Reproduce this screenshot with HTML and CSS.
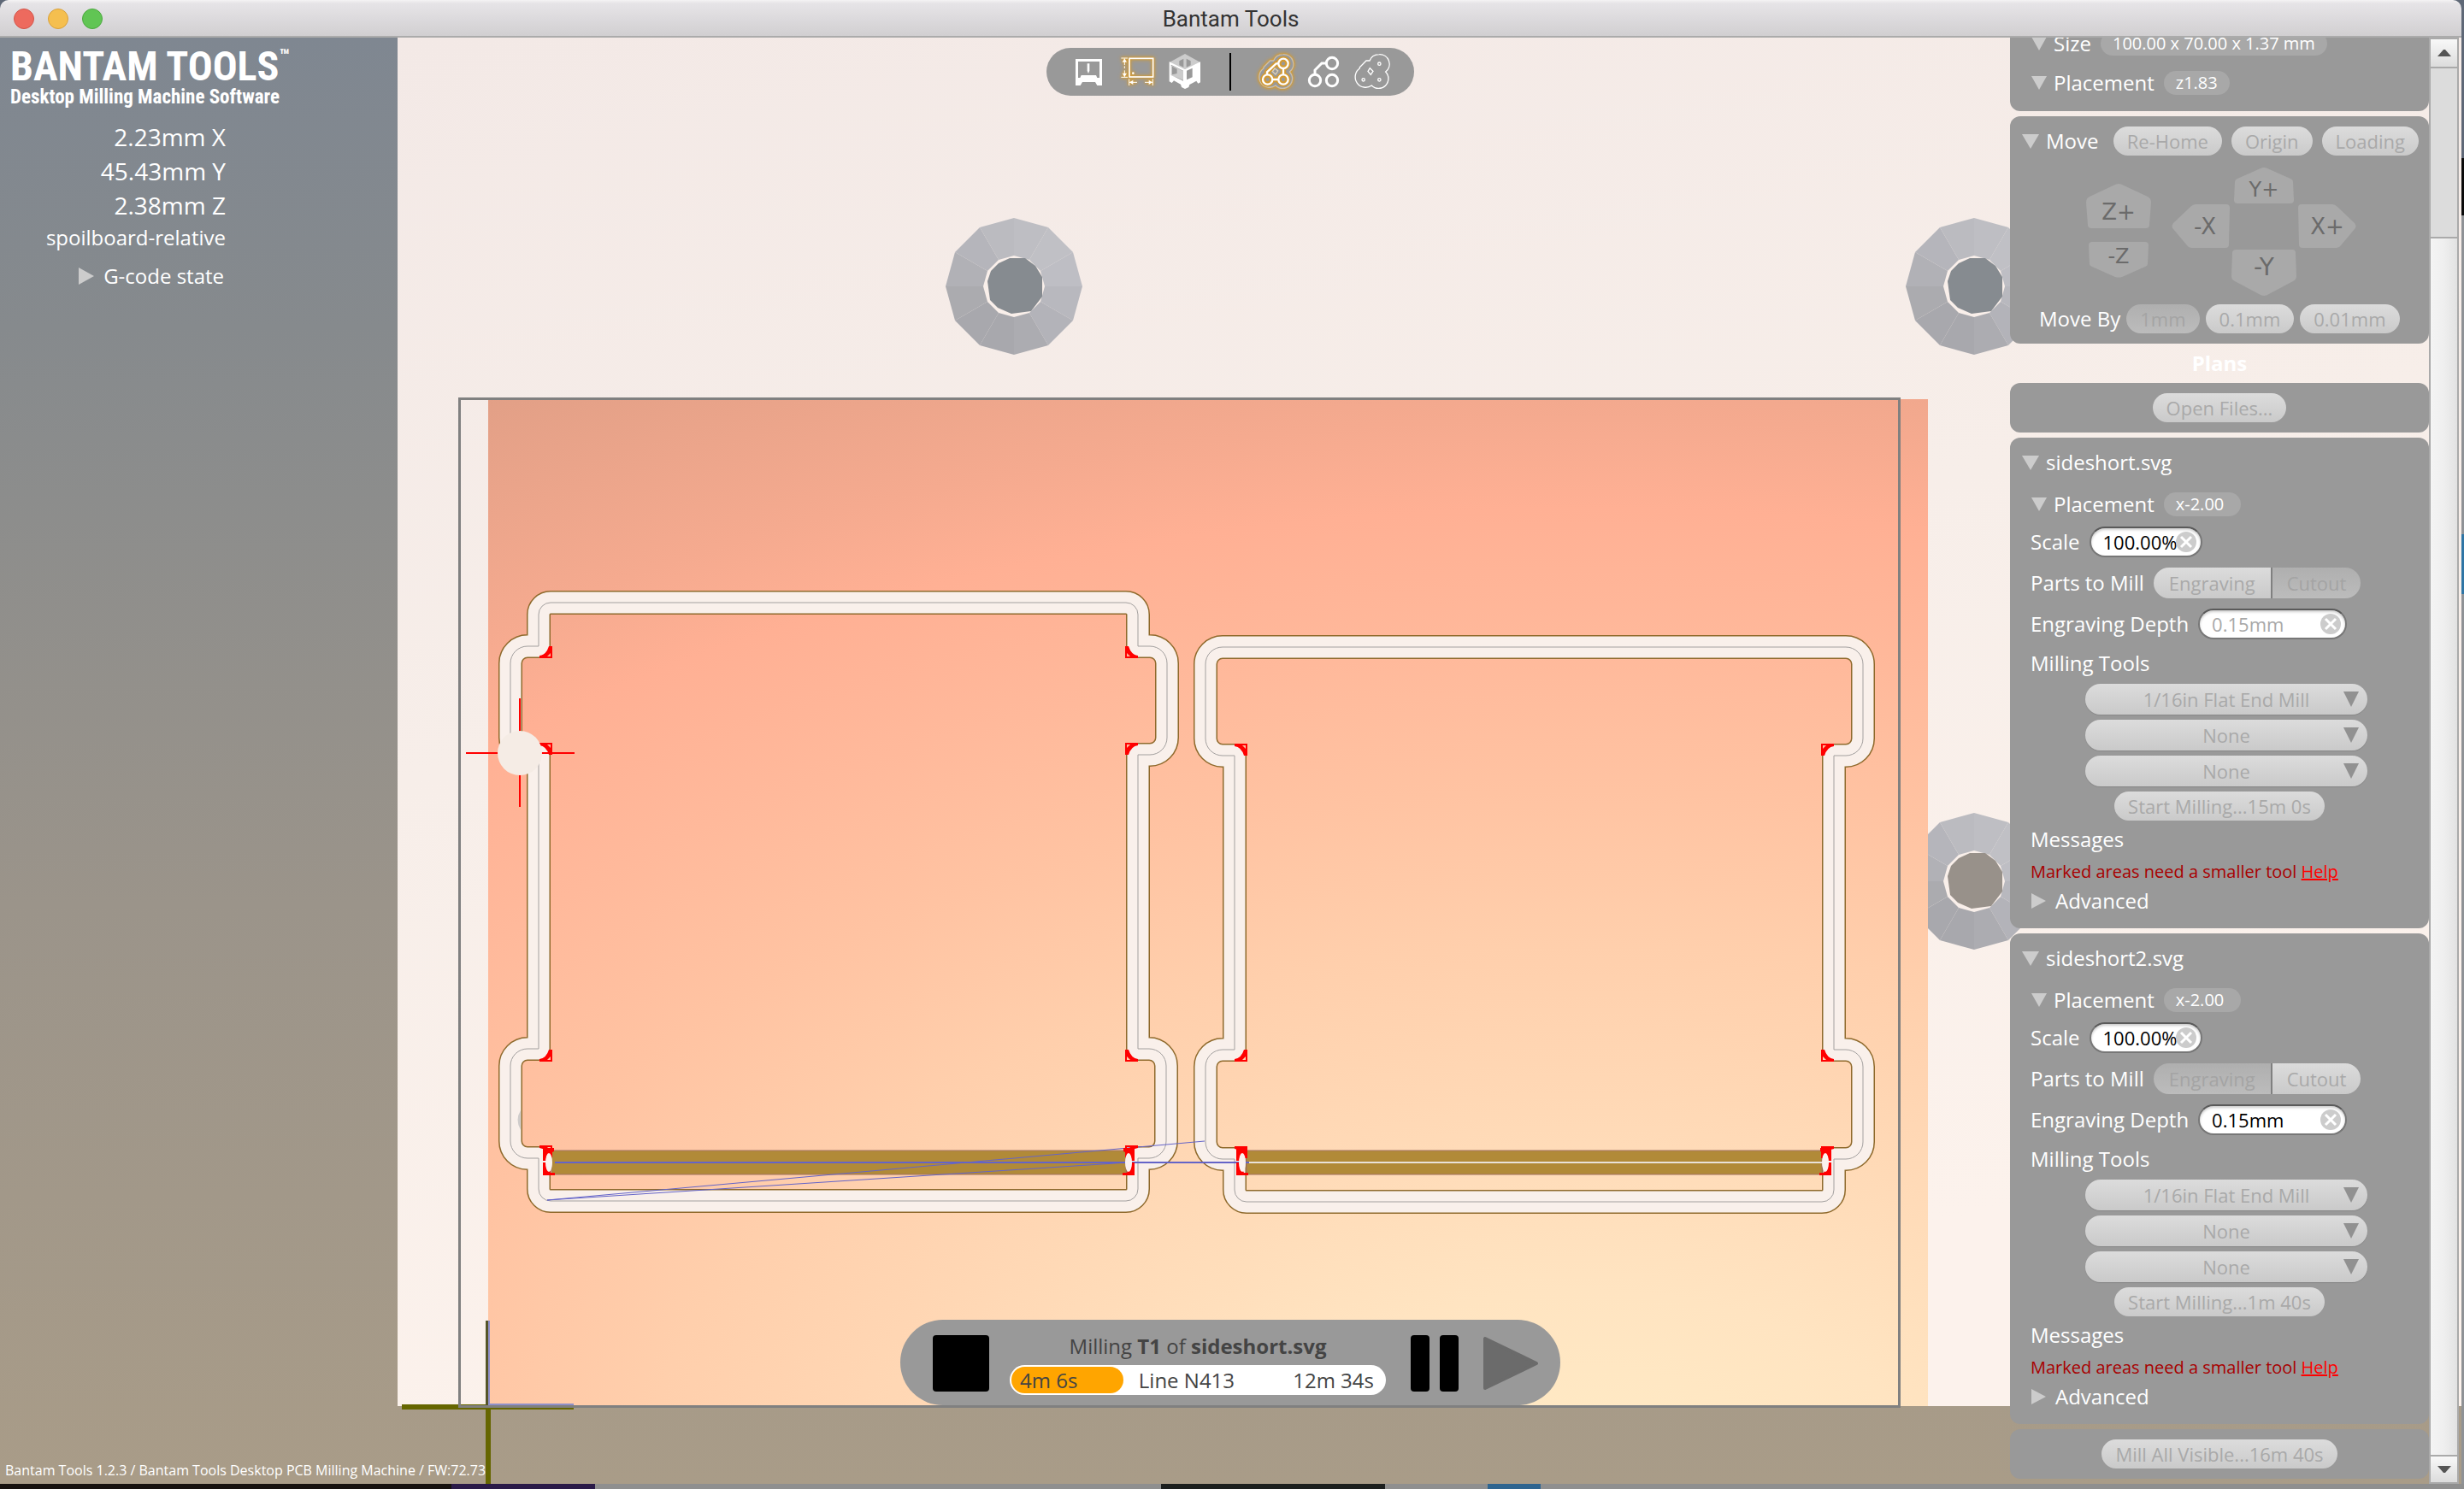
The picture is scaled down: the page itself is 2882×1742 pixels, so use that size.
FILE: index.html
```html
<!DOCTYPE html>
<html lang="en">
<head>
<meta charset="utf-8">
<title>Bantam Tools</title>
<link rel="stylesheet" href="styles.css">
</head>
<body>
<div class="window">
  <header class="titlebar">
    <div class="lights">
      <button class="light light-close" aria-label="Close"></button>
      <button class="light light-min" aria-label="Minimize"></button>
      <button class="light light-zoom" aria-label="Zoom"></button>
    </div>
    <h1 class="window-title">Bantam Tools</h1>
  </header>

  <div class="stage">
    <svg class="scene" viewBox="0 44 2879 1692" preserveAspectRatio="none" aria-hidden="true">
      <defs>
        <linearGradient id="bed" x1="0" y1="0" x2="0.3" y2="1">
          <stop offset="0" stop-color="#f3e9e6"/><stop offset="0.5" stop-color="#f7eee9"/><stop offset="1" stop-color="#fcf2ec"/>
        </linearGradient>
        <radialGradient id="stock" gradientUnits="userSpaceOnUse" cx="0" cy="0" r="1500" gradientTransform="translate(1850 1750) scale(1.7 1)">
          <stop offset="0" stop-color="#ffecc6"/><stop offset="0.16" stop-color="#ffe4c1"/><stop offset="0.3" stop-color="#ffd9b6"/>
          <stop offset="0.43" stop-color="#ffcfac"/><stop offset="0.55" stop-color="#ffc3a2"/><stop offset="0.66" stop-color="#ffb99b"/>
          <stop offset="0.77" stop-color="#ffb094"/><stop offset="0.84" stop-color="#f5aa8f"/><stop offset="1" stop-color="#e19f86"/>
        </radialGradient>
        <g id="washer">
          <path fill="#bebec3" d="M0 0V-80L40-69Z"/><path fill="#c0c0c5" d="M0 0L40-69L69-40Z"/><path fill="#bebec4" d="M0 0L69-40L80 0Z"/>
          <path fill="#b8b8be" d="M0 0H80L69 40Z"/><path fill="#b3b3b9" d="M0 0L69 40L40 69Z"/><path fill="#acacb1" d="M0 0L40 69L0 80Z"/>
          <path fill="#a8a8ad" d="M0 0V80L-40 69Z"/><path fill="#a8a8ad" d="M0 0L-40 69L-69 40Z"/><path fill="#ababaf" d="M0 0L-69 40L-80 0Z"/>
          <path fill="#b1b1b6" d="M0 0H-80L-69-40Z"/><path fill="#b5b5bb" d="M0 0L-69-40L-40-69Z"/><path fill="#bbbbc0" d="M0 0L-40-69L0-80Z"/>
          <path fill="#f9efea" d="M0-36L18-31L31-18L36 0L31 18L18 31L0 36L-18 31L-31 18L-36 0L-31-18L-18-31Z"/>
          <path d="M-5-33H13L25-24L33-11V12L20 29L-3 32L-19 25L-28 16L-31-6L-27-18L-18-27Z"/>
        </g>
        <g id="corner">
          <path fill="#f00" fill-rule="evenodd" d="M0 0H-15V-3Q-7-4-4-14H0ZM-2-2V-6L-6-2Z"/>
        </g>
        <g id="hook">
          <path fill="#f00" d="M0-17H13V-13L9-11V-2H0ZM0 0H3L9 12H14V15H0Z"/>
          <ellipse cx="7" cy="0" rx="4" ry="11" fill="#fbf2ee"/>
        </g>
        <path id="part1" d="M644 705H1317A14 14 0 0 1 1331 719V756H1345A20 20 0 0 1 1365 776V863A20 20 0 0 1 1345 883H1331V1227H1344A20 20 0 0 1 1364 1247V1335A20 20 0 0 1 1344 1355H1331V1391A14 14 0 0 1 1317 1405H644A14 14 0 0 1 630 1391V1355H617A20 20 0 0 1 597 1335V1247A20 20 0 0 1 617 1227H630V883H617A20 20 0 0 1 597 863V776A20 20 0 0 1 617 756H630V719A14 14 0 0 1 644 705Z"/>
        <path id="part2" d="M1430 757H2159A20 20 0 0 1 2179 777V864A20 20 0 0 1 2159 884H2145V1228H2159A20 20 0 0 1 2179 1248V1336A20 20 0 0 1 2159 1356H2145V1392A14 14 0 0 1 2131 1406H1458A14 14 0 0 1 1444 1392V1356H1430A20 20 0 0 1 1410 1336V1248A20 20 0 0 1 1430 1228H1444V884H1430A20 20 0 0 1 1410 864V777A20 20 0 0 1 1430 757Z"/>
      </defs>
      <rect x="465" y="44" width="2414" height="1601" fill="url(#bed)"/>
      <use href="#washer" x="1186" y="335" fill="#868b90"/>
      <use href="#washer" x="2309" y="335" fill="#868b90"/>
      <use href="#washer" x="2309" y="1031" fill="#98918a"/>
      <rect x="571" y="467" width="1684" height="1178" fill="url(#stock)"/>
      <path d="M470 1646H671M571 1646V1736" stroke="#660" stroke-width="6"/>
      <path d="M569.5 1545V1646" stroke="#555528" stroke-width="3"/>
      <path d="M572 1545V1643H671" fill="none" stroke="#9090c8" stroke-width="2"/>
      <rect x="537.5" y="466.5" width="1684" height="1179" fill="none" stroke="#808080" stroke-width="3"/>

      <g fill="none" stroke="#8f6a2c" stroke-width="28" stroke-linejoin="round">
        <use href="#part1"/><use href="#part2"/>
      </g>
      <path fill="#b18a38" stroke="#a37263" d="M645 1346H1317V1374H645ZM1458 1346H2131V1374H1458Z"/>
      <g fill="none" stroke="#f9f0eb" stroke-width="25" stroke-linejoin="round">
        <use href="#part1"/><use href="#part2"/>
      </g>
      <g fill="none" stroke="#a3a09f">
        <use href="#part1"/><use href="#part2"/>
      </g>
      <path d="M1461 1360H2131" stroke="#e9e2da" stroke-width="2"/>
      <path d="M649 1360H1461" stroke="#6464c8" stroke-width="2"/>
      <path d="M1409 1335L640 1404L1319 1360" fill="none" stroke="#6464c8"/>
      <use href="#corner" transform="translate(646 770)"/>
      <use href="#corner" transform="translate(646 869) scale(1 -1)"/>
      <use href="#corner" transform="translate(646 1242)"/>
      <use href="#corner" transform="translate(646 1340) scale(1 -1)"/>
      <use href="#corner" transform="translate(1316 770) scale(-1 1)"/>
      <use href="#corner" transform="translate(1316 869) scale(-1 -1)"/>
      <use href="#corner" transform="translate(1316 1242) scale(-1 1)"/>
      <use href="#corner" transform="translate(1316 1340) scale(-1 -1)"/>
      <use href="#corner" transform="translate(1459 870) scale(1 -1)"/>
      <use href="#corner" transform="translate(1459 1242)"/>
      <use href="#corner" transform="translate(1459 1341) scale(1 -1)"/>
      <use href="#corner" transform="translate(2130 870) scale(-1 -1)"/>
      <use href="#corner" transform="translate(2130 1242) scale(-1 1)"/>
      <use href="#corner" transform="translate(2130 1341) scale(-1 -1)"/>
      <use href="#hook" transform="translate(635 1360)"/>
      <use href="#hook" transform="translate(1327 1360) scale(-1 1)"/>
      <use href="#hook" transform="translate(1446 1360)"/>
      <use href="#hook" transform="translate(2142 1360) scale(-1 1)"/>
      <path d="M609 1299Q602 1310 609 1322Z" fill="#cfcccb"/>
      <path d="M545 881H672M608 817V944" stroke="#f00" stroke-width="2"/>
      <circle cx="608" cy="881" r="26" fill="#f5ece5"/>
      <path d="M635 881H672" stroke="#f00" stroke-width="2"/>
    </svg>

    <aside class="status">
      <div class="logo">
        <p class="logo-name">BANTAM TOOLS<sup class="logo-tm">™</sup></p>
        <p class="logo-tag">Desktop Milling Machine Software</p>
      </div>
      <div class="readout">
        <p class="axis">2.23mm X</p>
        <p class="axis">45.43mm Y</p>
        <p class="axis">2.38mm Z</p>
        <p class="relative">spoilboard-relative</p>
        <button class="disclosure gcode"><svg class="tri-right" viewBox="0 0 18 20"><path d="M0 0L18 10L0 20Z"/></svg>G-code state</button>
      </div>
      <p class="version">Bantam Tools 1.2.3 / Bantam Tools Desktop PCB Milling Machine / FW:72.73</p>
    </aside>

    <main class="viewport">
      <nav class="toolbar" aria-label="View">
        <button class="tool" aria-label="Machine"><svg viewBox="138 168 168 168"><path fill="#fff" fill-rule="evenodd" d="M174 207H267V300H250L243 288H198L191 300H174ZM183 216V273H190L194 264H246L250 273H258V216Z"/><path fill="#fff" d="M215 223H223V248L219 258L215 248Z"/></svg></button>
        <button class="tool" aria-label="Dimensions"><svg class="glow" viewBox="306 168 168 168"><g fill="none" stroke="#fff" stroke-width="5"><rect x="363" y="205" width="83" height="65"/><path stroke-width="3" d="M334 204H357M334 271H357M346 206V228M346 232V240M346 247V269M362 277V300M445 277V300M364 289H390M417 289H443"/></g><path fill="#fff" d="M346 205L354 218H338ZM346 270L354 257H338ZM363 289L376 281V297ZM444 289L431 281V297Z"/><circle cx="376" cy="257" r="4" fill="#fff"/></svg></button>
        <button class="tool" aria-label="3D view"><svg viewBox="474 168 168 168"><path fill="#ccc" d="M558 189L612 219L558 243L503 219Z"/><path fill="#999" d="M538 214L553 206V236L538 229ZM563 206L578 214V229L563 236Z"/><path fill="#ccc" d="M508 229L553 250V282L530 272L508 268Z"/><path fill="#999" d="M513 233L530 242V258L513 262Z"/><path fill="#fff" fill-rule="evenodd" d="M503 217L558 243L612 217V289L604 293L598 284L574 297L571 306L558 312L546 306L543 296L519 283L512 291L503 286ZM509 227V264L530 274L552 284V248ZM564 248V280L584 271V239Z"/></svg></button>
        <span class="divider"></span>
        <button class="tool" aria-label="All traces"><svg class="glow" viewBox="792 168 168 168"><path fill="#999" stroke="#c9c0b0" stroke-width="4" d="M869 213C875 197 889 191 903 191A34 34 0 0 1 925 252A34 34 0 0 1 876 300A34 34 0 1 1 834 240V236L857 213Z"/><g fill="#999" stroke="#d29a35" stroke-width="19"><path fill="none" d="M887 223H878L846 253V264M864 279H887M903 239V263"/><circle cx="848" cy="279" r="16"/><circle cx="903" cy="279" r="16"/><circle cx="903" cy="223" r="16"/></g><g fill="none" stroke="#fff" stroke-width="7"><path d="M887 223H878L846 253V264M864 279H887M903 239V263"/><circle cx="848" cy="279" r="17"/><circle cx="903" cy="279" r="17"/><circle cx="903" cy="223" r="17"/></g><path fill="none" stroke="#ddd0b8" stroke-width="4" d="M873 240L884 249L876 261L865 251Z"/></svg></button>
        <button class="tool" aria-label="Traces"><svg viewBox="960 168 168 168"><g fill="none" stroke="#fff" stroke-width="9"><circle cx="1014" cy="282" r="20"/><circle cx="1074" cy="282" r="20"/><circle cx="1074" cy="222" r="20"/><path d="M1054 222H1038L1014 246V262"/></g></svg></button>
        <button class="tool" aria-label="Outline"><svg viewBox="1128 168 168 168"><g fill="none" stroke="#fff" stroke-width="4"><path d="M1206 213C1212 197 1226 191 1240 191A34 34 0 0 1 1262 252A34 34 0 1 1 1213 300A34 34 0 1 1 1171 240V236L1194 213Z"/><circle cx="1184" cy="280" r="5"/><circle cx="1240" cy="280" r="5"/><circle cx="1240" cy="224" r="5"/><path d="M1207 239L1218 250L1210 262L1200 250Z"/></g></svg></button>
      </nav>

      <section class="player" aria-label="Milling job">
        <button class="play-btn" aria-label="Stop"><svg class="stop-icon" viewBox="0 0 66 66"><rect width="66" height="66" rx="4"/></svg></button>
        <div class="job">
          <p class="job-title">Milling <b>T1</b> of <b>sideshort.svg</b></p>
          <div class="progress">
            <div class="elapsed" style="width:30%">4m 6s</div>
            <span class="line">Line N413</span>
            <span class="remaining">12m 34s</span>
          </div>
        </div>
        <button class="play-btn" aria-label="Pause"><svg class="pause-icon" viewBox="0 0 56 66"><rect width="22" height="66" rx="4"/><rect x="34" width="22" height="66" rx="4"/></svg></button>
        <button class="play-btn" aria-label="Play"><svg class="play-icon" viewBox="0 0 64 66"><path fill="#6b6b6b" stroke="#6b6b6b" stroke-width="4" stroke-linejoin="round" d="M2 4V62L62 33Z"/></svg></button>
      </section>
    </main>

    <aside class="panels">
      <section class="panel material">
        <div class="row sub"><button class="disclosure"><svg class="tri-sub" viewBox="0 0 18 16"><path d="M0 0H18L9 16Z"/></svg>Size</button><span class="pill">100.00 x 70.00 x 1.37 mm</span></div>
        <div class="row sub"><button class="disclosure"><svg class="tri-sub" viewBox="0 0 18 16"><path d="M0 0H18L9 16Z"/></svg>Placement</button><span class="pill">z1.83</span></div>
      </section>

      <section class="panel move">
        <div class="move-row"><button class="disclosure"><svg class="tri-down" viewBox="0 0 20 17"><path d="M0 0H20L10 17Z"/></svg>Move</button>
          <div class="homing"><button class="btn" disabled>Re-Home</button><button class="btn" disabled>Origin</button><button class="btn" disabled>Loading</button></div></div>
        <div class="jog">
          <div class="jog-z">
            <button class="jog-btn" disabled><svg width="76" height="54" viewBox="0 0 76 54"><path d="M34 2Q38 0 42 2L72 16Q76 18 76 23L74 49Q74 53 70 53H6Q2 53 2 49L0 23Q0 18 4 16Z"/><text x="38" y="43" font-size="26">Z+</text></svg></button>
            <button class="jog-btn" disabled><svg width="70" height="42" viewBox="0 0 70 42"><path d="M4 0H66Q70 0 70 4L69 26Q69 28 66 29L39 41Q35 42 31 41L4 29Q1 28 1 26L0 4Q0 0 4 0Z"/><text x="35" y="25" font-size="24">-Z</text></svg></button>
          </div>
          <div class="jog-xy">
            <button class="jog-btn yp" disabled><svg width="70" height="42" viewBox="0 0 70 42"><path d="M31 1Q35-1 39 1L66 13Q69 14 69 17L70 38Q70 42 66 42H4Q0 42 0 38L1 17Q1 14 4 13Z"/><text x="35" y="34" font-size="24">Y+</text></svg></button>
            <button class="jog-btn xm" disabled><svg width="68" height="52" viewBox="0 0 68 52"><path d="M2 29Q-1 26 2 22L22 3Q25 0 28 0H64Q68 0 68 4L67 47Q67 51 63 51H23Q20 51 18 48Z"/><text x="39" y="35" font-size="26">-X</text></svg></button>
            <button class="jog-btn xp" disabled><svg width="68" height="52" viewBox="0 0 68 52"><path d="M66 29Q69 26 66 22L46 3Q43 0 40 0H4Q0 0 0 4L1 47Q1 51 5 51H45Q48 51 50 48Z"/><text x="34" y="35" font-size="26">X+</text></svg></button>
            <button class="jog-btn ym" disabled><svg width="76" height="54" viewBox="0 0 76 54"><path d="M34 53Q38 55 42 53L72 37Q76 35 76 31L75 4Q75 0 71 0H6Q1 0 1 4L0 31Q0 35 4 37Z"/><text x="38" y="30" font-size="28">-Y</text></svg></button>
          </div>
        </div>
        <div class="move-by"><span>Move By</span><button class="btn pressed" disabled>1mm</button><button class="btn" disabled>0.1mm</button><button class="btn" disabled>0.01mm</button></div>
      </section>

      <h2 class="plans">Plans</h2>
      <section class="panel single"><button class="btn" disabled>Open Files...</button></section>

      <section class="panel plan">
        <div class="row title"><button class="disclosure"><svg class="tri-down" viewBox="0 0 20 17"><path d="M0 0H20L10 17Z"/></svg>sideshort.svg</button></div>
        <div class="row sub"><button class="disclosure"><svg class="tri-sub" viewBox="0 0 18 16"><path d="M0 0H18L9 16Z"/></svg>Placement</button><span class="pill offset">x-2.00</span></div>
        <div class="row scale"><label for="scale1">Scale</label><div class="field small"><input id="scale1" type="text" value="100.00%"><button class="clear" aria-label="Clear"><svg viewBox="0 0 24 24"><circle cx="12" cy="12" r="12"/><path d="M6 6L18 18M18 6L6 18"/></svg></button></div></div>
        <div class="row parts"><span>Parts to Mill</span><div class="segments"><button class="btn" disabled>Engraving</button><button class="btn pressed" disabled>Cutout</button></div></div>
        <div class="row depth"><label for="depth1">Engraving Depth</label><div class="field large"><input id="depth1" type="text" value="0.15mm" disabled><button class="clear" aria-label="Clear"><svg viewBox="0 0 24 24"><circle cx="12" cy="12" r="12"/><path d="M6 6L18 18M18 6L6 18"/></svg></button></div></div>
        <div class="row">Milling Tools</div>
        <div class="tools">
          <div class="select"><select aria-label="Tool 1" disabled><option>1/16in Flat End Mill</option></select><svg class="tri-sel" viewBox="0 0 18 18"><path d="M0 0H18L9 18Z"/></svg></div>
          <div class="select"><select aria-label="Tool 2" disabled><option>None</option></select><svg class="tri-sel" viewBox="0 0 18 18"><path d="M0 0H18L9 18Z"/></svg></div>
          <div class="select"><select aria-label="Tool 3" disabled><option>None</option></select><svg class="tri-sel" viewBox="0 0 18 18"><path d="M0 0H18L9 18Z"/></svg></div>
        </div>
        <button class="btn start" disabled>Start Milling...15m 0s</button>
        <div class="row messages">Messages</div>
        <p class="row warning"><span>Marked areas need a smaller tool <a href="#help">Help</a></span></p>
        <div class="row sub advanced"><button class="disclosure"><svg class="tri-adv" viewBox="0 0 20 18"><path d="M0 0L17 9L0 18Z"/></svg>Advanced</button></div>
      </section>

      <section class="panel plan">
        <div class="row title"><button class="disclosure"><svg class="tri-down" viewBox="0 0 20 17"><path d="M0 0H20L10 17Z"/></svg>sideshort2.svg</button></div>
        <div class="row sub"><button class="disclosure"><svg class="tri-sub" viewBox="0 0 18 16"><path d="M0 0H18L9 16Z"/></svg>Placement</button><span class="pill offset">x-2.00</span></div>
        <div class="row scale"><label for="scale2">Scale</label><div class="field small"><input id="scale2" type="text" value="100.00%"><button class="clear" aria-label="Clear"><svg viewBox="0 0 24 24"><circle cx="12" cy="12" r="12"/><path d="M6 6L18 18M18 6L6 18"/></svg></button></div></div>
        <div class="row parts"><span>Parts to Mill</span><div class="segments"><button class="btn pressed" disabled>Engraving</button><button class="btn" disabled>Cutout</button></div></div>
        <div class="row depth"><label for="depth2">Engraving Depth</label><div class="field large"><input id="depth2" type="text" value="0.15mm"><button class="clear" aria-label="Clear"><svg viewBox="0 0 24 24"><circle cx="12" cy="12" r="12"/><path d="M6 6L18 18M18 6L6 18"/></svg></button></div></div>
        <div class="row">Milling Tools</div>
        <div class="tools">
          <div class="select"><select aria-label="Tool 1" disabled><option>1/16in Flat End Mill</option></select><svg class="tri-sel" viewBox="0 0 18 18"><path d="M0 0H18L9 18Z"/></svg></div>
          <div class="select"><select aria-label="Tool 2" disabled><option>None</option></select><svg class="tri-sel" viewBox="0 0 18 18"><path d="M0 0H18L9 18Z"/></svg></div>
          <div class="select"><select aria-label="Tool 3" disabled><option>None</option></select><svg class="tri-sel" viewBox="0 0 18 18"><path d="M0 0H18L9 18Z"/></svg></div>
        </div>
        <button class="btn start" disabled>Start Milling...1m 40s</button>
        <div class="row messages">Messages</div>
        <p class="row warning"><span>Marked areas need a smaller tool <a href="#help">Help</a></span></p>
        <div class="row sub advanced"><button class="disclosure"><svg class="tri-adv" viewBox="0 0 20 18"><path d="M0 0L17 9L0 18Z"/></svg>Advanced</button></div>
      </section>

      <section class="panel single"><button class="btn" disabled>Mill All Visible...16m 40s</button></section>
    </aside>

    <div class="scrollbar">
      <button class="scroll-btn" aria-label="Scroll up"><svg viewBox="0 0 16 8"><path d="M0 8L7 0H9L16 8Z"/></svg></button>
      <div class="track"></div>
      <div class="thumb"></div>
      <button class="scroll-btn" aria-label="Scroll down"><svg viewBox="0 0 16 8"><path d="M0 0H16L9 8H7Z"/></svg></button>
    </div>
  </div>
</div>
<div class="desktop"></div>
</body>
</html>
```
FILE: styles.css
```css
* { box-sizing: border-box; }

body {
  margin: 0;
  min-height: 100vh;
  display: grid;
  grid-template-rows: 1fr 6px;
  padding-right: 3px;
  background: linear-gradient(#5f6877 0 185px, #0a0a0a 185px 252px, #8f9296 252px 625px, #2f75a5 625px 695px, #8f9296 695px);
  font-family: "Open Sans", "Noto Sans", sans-serif;
  font-size: 24px;
  line-height: 36px;
  color: #fff;
}

p, h1, h2 { margin: 0; font-weight: 400; }
svg { display: block; }

button, input, select {
  font: inherit;
  color: inherit;
  margin: 0;
  padding: 0;
  border: 0;
  background: none;
}

.window {
  display: grid;
  grid-template-rows: 44px minmax(0, 1fr);
  height: calc(100vh - 6px);
}

.titlebar {
  display: grid;
  grid-template-columns: 1fr auto 1fr;
  align-items: center;
  padding: 2px 16px 0;
  border-radius: 10px 10px 0 0;
  background: linear-gradient(#f4f3f4, #e6e4e7 4px, #d1cfd1 42px);
  border-bottom: 2px solid #ababab;
}

.lights { display: flex; gap: 16px; }
.light { width: 24px; height: 24px; border-radius: 50%; border: 1px solid; }
.light-close { background: #ed6a5e; border-color: #d35549; }
.light-min { background: #f5bf4f; border-color: #d9a13b; }
.light-zoom { background: #61c554; border-color: #4ca93f; }

.window-title {
  font-family: Roboto, "Liberation Sans", sans-serif;
  font-size: 26px;
  line-height: 40px;
  color: #333;
}

.stage {
  position: relative;
  display: grid;
  grid-template-columns: 465px minmax(0, 1fr) 490px 38px;
  grid-template-rows: minmax(0, 1fr);
  background: linear-gradient(#7f8791, #868a8d 20%, #9b948a 60%, #a99c88);
}

.scene { position: absolute; inset: 0; width: 100%; height: 100%; }
.status, .viewport, .panels, .scrollbar { position: relative; }

/* machine status */
.status { display: flex; flex-direction: column; padding: 10px 0 4px 12px; }
.logo { font-family: "Liberation Sans Narrow", "Roboto Condensed", "Open Sans Condensed", sans-serif; }
.logo-name { display: flex; font-size: 48px; line-height: 48px; font-weight: 700; white-space: nowrap; }
.logo-tm { font-size: 22px; line-height: 24px; }
.logo-tag { font-size: 23px; line-height: 24px; font-weight: 700; white-space: nowrap; }
.readout { width: 252px; padding-top: 14px; text-align: right; }
.axis { font-size: 28px; line-height: 40px; }
.gcode { margin: 9px 2px 0 auto; }
.version { margin: auto 0 0 -6px; font-size: 16px; line-height: 24px; white-space: nowrap; }

.disclosure { display: flex; align-items: center; gap: 8px; white-space: nowrap; }
.disclosure svg { fill: #ccc; }
.gcode { gap: 11px; }
.tri-right { width: 18px; height: 20px; }
.tri-down { width: 20px; height: 17px; }
.tri-sub { width: 18px; height: 16px; }
.tri-adv { width: 20px; height: 18px; }

/* view toolbar and job player */
.viewport {
  display: flex;
  flex-direction: column;
  justify-content: space-between;
  align-items: center;
  padding: 12px 0 92px 62px;
}

.toolbar {
  display: flex;
  align-items: center;
  padding: 0 22px;
  border-radius: 28px;
  background: #999;
}
.tool { width: 56px; height: 56px; }
.tool svg { width: 56px; height: 56px; }
.glow { filter: drop-shadow(0 0 1px #e09c20) drop-shadow(0 0 2px #e09c20); }
.divider { width: 2px; height: 44px; margin: 0 24px; background: #000; }

.player {
  display: flex;
  align-items: center;
  height: 100px;
  padding: 2px 26px 0 38px;
  border-radius: 50px;
  background: #999;
  color: #444;
}
.stop-icon { width: 66px; height: 66px; }
.pause-icon { width: 56px; height: 66px; }
.play-icon { width: 64px; height: 66px; }
.job { width: 440px; margin: 0 29px 0 24px; text-align: center; }
.job-title { line-height: 34px; }
.play-btn + .play-btn { margin-left: 29px; }
.progress {
  display: flex;
  align-items: center;
  margin-top: 5px;
  height: 35px;
  padding: 2px;
  border-radius: 18px;
  background: #fff;
}
.elapsed { height: 31px; padding-left: 10px; border-radius: 16px; background: #ffa500; text-align: left; line-height: 32px; }
.line { margin-left: 18px; }
.remaining { margin: 0 12px 0 auto; }

/* control panels, scrolled to the end */
.panels {
  display: flex;
  flex-direction: column;
  justify-content: flex-end;
  gap: 6px;
  padding-bottom: 6px;
  overflow: hidden;
}
.panel { flex: none; padding: 12px 14px; border-radius: 12px; background: #999; }
.row { display: flex; align-items: center; gap: 11px; height: 36px; margin: 0 0 10px 10px; white-space: nowrap; }
.sub { margin-left: 11px; }
.material { padding-bottom: 5px; }
.title { height: 34px; margin: 0 0 14px; }
.pill { padding: 0 14px; border-radius: 14px; background: #a8a8a8; font-size: 20px; line-height: 28px; }
.offset { padding-right: 20px; }

.btn {
  height: 34px;
  padding: 0 16px;
  border-radius: 17px;
  background: linear-gradient(#dcdcdc, #cacaca);
  color: #a9a9a9;
  font-size: 22px;
  line-height: 34px;
  white-space: nowrap;
}
.btn.pressed { background: linear-gradient(#afafaf, #bcbcbc); color: #a4a4a4; }

.move-row { display: flex; align-items: center; justify-content: space-between; height: 34px; }
.homing { display: flex; gap: 11px; margin-right: -2px; }
.jog { display: flex; gap: 24px; height: 174px; padding-left: 75px; }
.jog-z { display: grid; gap: 15px; align-content: start; justify-items: center; padding-top: 32px; }
.jog-xy {
  display: grid;
  grid-template: 42px 52px 54px / 68px 80px 68px;
  gap: 1px 0;
  align-content: start;
  justify-items: center;
  padding-top: 14px;
}
.yp { grid-area: 1 / 2; }
.xm { grid-area: 2 / 1; }
.xp { grid-area: 2 / 3; }
.ym { grid-area: 3 / 2; }
.jog-btn path { fill: #a9a9a9; }
.jog-btn text { font-family: "DejaVu Sans", sans-serif; fill: #6b6b6b; text-anchor: middle; }
.move-by { display: flex; align-items: center; gap: 7px; height: 34px; padding-left: 20px; }

.plans { height: 34px; font-size: 24px; line-height: 34px; font-weight: 700; text-align: center; }
.single { display: flex; justify-content: center; }

.plan { display: flex; flex-direction: column; padding-bottom: 14px; }
.plan .sub { margin-bottom: 8px; }
.plan .scale, .plan .parts { margin-bottom: 12px; }
.field {
  display: flex;
  align-items: center;
  height: 36px;
  padding: 0 5px 0 14px;
  border: 2px solid #777;
  border-top-color: #5a5a5a;
  border-radius: 18px;
  background: #fff;
  box-shadow: inset 0 2px 3px #ccc;
  color: #000;
}
.small { width: 132px; }
.large { width: 174px; }
.field input { flex: 1; width: 0; min-width: 0; height: 30px; font-size: 22px; }
.field input:disabled { color: #a9a9a9; }
.clear { flex: none; width: 24px; height: 24px; margin-left: -3px; }
.clear circle { fill: #ccc; }
.clear path { stroke: #fff; stroke-width: 3; }
.segments { display: flex; }
.segments .btn { height: 36px; padding: 0 17px; }
.segments .btn:first-child { padding: 0 18px; border-radius: 18px 0 0 18px; border-right: 2px solid #808080; }
.segments .btn:last-child { border-radius: 0 18px 18px 0; }
.tools { display: grid; gap: 6px; width: 330px; margin: -4px 0 6px 74px; }
.select { display: grid; align-items: center; }
.select select {
  grid-area: 1 / 1;
  height: 36px;
  padding: 0 20px;
  border-radius: 18px;
  appearance: none;
  background: linear-gradient(#dcdcdc, #cacaca);
  box-shadow: 0 1px 1px #888;
  color: #a9a9a9;
  font-size: 22px;
  text-align-last: center;
  opacity: 1;
}
.tri-sel { grid-area: 1 / 1; justify-self: end; width: 18px; height: 18px; margin-right: 10px; fill: #919191; pointer-events: none; }
.start { align-self: center; }
.plan .messages { margin: 4px 0 0 10px; }
.plan .warning { margin-bottom: 0; padding-top: 4px; font-size: 20px; color: #a80000; }
.warning a { color: #f00; }
.plan .advanced { margin-bottom: 0; }

/* scroll bar */
.scrollbar {
  display: grid;
  grid-template-rows: 36px 197px minmax(0, 1fr) 34px;
  margin-right: 3px;
  border-left: 2px solid #aaa;
  border-right: 2px solid #aaa;
  background: #dcdcdc;
}
.scroll-btn { display: grid; place-items: center; border: 1px solid #aaa; border-width: 2px 0; background: linear-gradient(#f8f8f8, #dcdcdc); }
.scroll-btn svg { width: 16px; height: 8px; fill: #555; }
.thumb { border-top: 2px solid #aaa; background: linear-gradient(90deg, #f4f4f4, #efefef 50%, #e2e2e2); }

/* windows showing below the app */
.desktop {
  margin-right: -3px;
  background: linear-gradient(90deg, #16110f 0 528px, #2a1a48 528px 696px, #8f8f8f 696px 1358px, #1c1f1e 1358px 1620px, #8f8f8f 1620px 1740px, #2f6590 1740px 1802px, #8f8f8f 1802px);
}
```
